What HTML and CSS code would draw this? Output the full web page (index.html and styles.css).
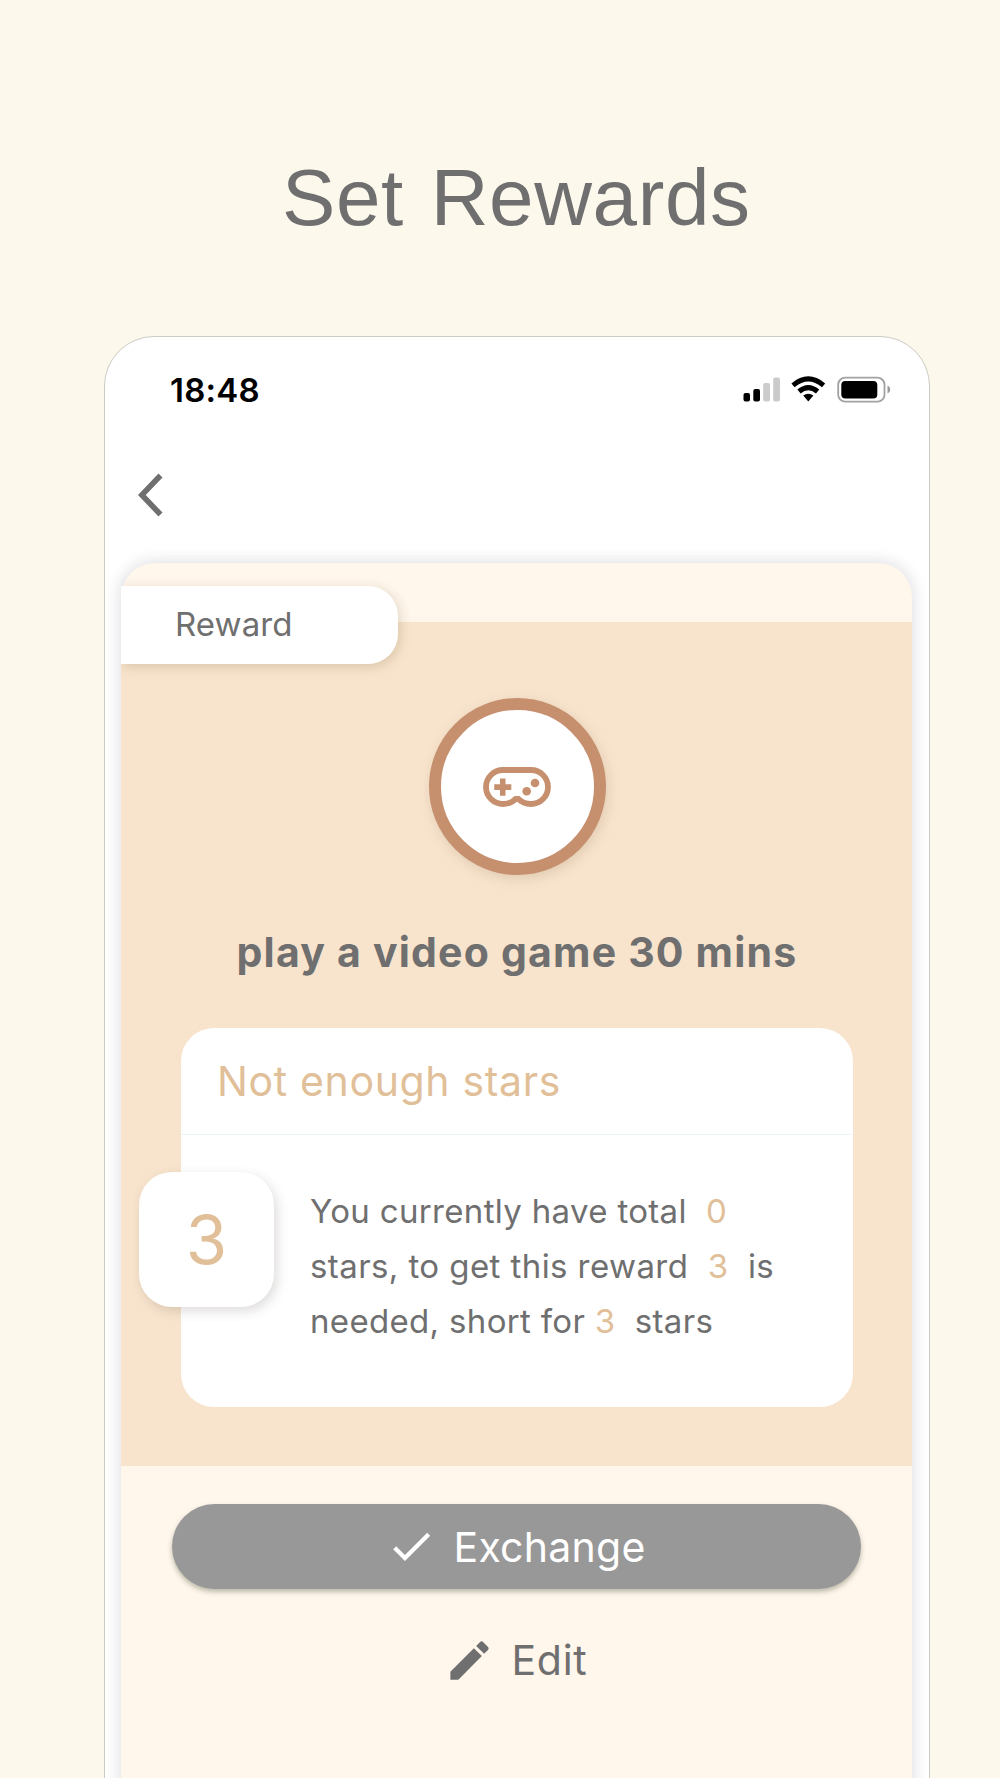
FILE: index.html
```html
<!DOCTYPE html>
<html lang="en">
<head>
<meta charset="utf-8">
<title>Set Rewards</title>
<link rel="stylesheet" href="styles.css">
</head>
<body>
<h1 class="headline">Set Rewards</h1>
<main class="phone">
  <div class="status">
    <span class="time">18:48</span>
    <svg class="status-icons" width="148" height="28" viewBox="0 0 148 28">
      <rect x=".5" y="17" width="6.5" height="8.5" rx="2"/>
      <rect x="10.3" y="13" width="6.7" height="12.5" rx="2"/>
      <g fill="#cbcbcb"><rect x="20.2" y="7" width="6.8" height="18.5" rx="2"/><rect x="30.2" y="1.5" width="6.8" height="24" rx="2"/></g>
      <g fill="none" stroke="#000" stroke-width="5">
        <path d="M50 9.3Q65.3-3.4 80.6 9.3"/>
        <path d="M56 15.5Q65.3 7.6 74.6 15.5"/>
      </g>
      <path d="M60.2 19.5Q65.3 15.9 70.4 19.5L65.3 25.6Z"/>
      <rect x="95.2" y="1.7" width="46.3" height="24" rx="7" fill="none" stroke="#a2a2a2" stroke-width="1.8"/>
      <rect x="98.3" y="5" width="36" height="17.5" rx="4"/>
      <path d="M144.5 9.5Q147.2 10.5 147.2 13.5T144.5 17.5Z" fill="#999"/>
    </svg>
  </div>
  <nav class="nav">
    <svg width="26" height="44" viewBox="0 0 26 44"><path d="M22.5 2.5L3.8 22L22.5 41.5" fill="none" stroke="#6f6f70" stroke-width="5.6"/></svg>
  </nav>
  <section class="card">
    <div class="tab">Reward</div>
    <div class="panel">
      <div class="medal">
        <svg width="68" height="40" viewBox="0 0 68 40" fill="#c6906f">
          <path d="M20 3H48A17 17 0 0 1 48 37C42 37 38 34.8 35.2 31.8H32.8C30 34.8 26 37 20 37A17 17 0 0 1 20 3Z" fill="none" stroke="#c6906f" stroke-width="5.8"/>
          <path d="M17 11.6H22.5V17.3H28.3V23H22.5V28.8H17V23H11.2V17.3H17Z"/>
          <circle cx="43.7" cy="24.3" r="4.3"/><circle cx="52" cy="16" r="4.3"/>
        </svg>
      </div>
      <h2 class="title">play a video game 30 mins</h2>
      <div class="info">
        <div class="info-head">Not enough stars</div>
        <div class="info-body">
          <div class="count">3</div>
          <p class="message">You currently have total &nbsp;<b>0</b><br><span class="wide">stars, to get this reward &nbsp;<b>3</b>&nbsp; is</span><br>needed, short for <b>3</b>&nbsp; stars</p>
        </div>
      </div>
    </div>
    <div class="exchange">
      <svg width="50.5" height="50.5" viewBox="0 0 24 24" fill="#fff"><path d="M9 16.17L4.83 12l-1.42 1.41L9 19 21 7l-1.41-1.41z"/></svg>
      <span>Exchange</span>
    </div>
    <div class="edit">
      <svg width="51" height="51" viewBox="0 0 24 24" fill="#6f6f70"><path d="M3 17.25V21h3.75L17.81 9.94l-3.75-3.75L3 17.25zM20.71 7.04c.39-.39.39-1.02 0-1.41l-2.34-2.34c-.39-.39-1.02-.39-1.41 0l-1.83 1.83 3.75 3.75 1.83-1.83z"/></svg>
      <span>Edit</span>
    </div>
  </section>
</main>
</body>
</html>
```
FILE: styles.css
```css
* { box-sizing: border-box; }
body {
  margin: 0;
  height: 1778px;
  overflow: hidden;
  display: flex;
  flex-direction: column;
  background: #fdf8ec;
  color: #6f6f70;
  font-family: Inter, "Liberation Sans", sans-serif;
}
svg { display: block; flex: none; }
.headline {
  flex: none;
  margin: 0;
  height: 336px;
  padding: 153px 0 0 282px;
  font: 400 80px/90px "Liberation Sans", sans-serif;
  letter-spacing: .6px;
  word-spacing: 4px;
  white-space: nowrap;
}
.phone {
  width: 826px;
  height: 1500px;
  flex: none;
  margin-left: 104px;
  border: 1px solid #cbcbc3;
  border-radius: 50px;
  background: #fff;
}
.status {
  display: flex;
  justify-content: space-between;
  height: 103px;
  padding: 38.5px 38px 0 65px;
}
.time {
  color: #000;
  font-weight: 600;
  font-size: 33px;
  line-height: 28px;
  letter-spacing: .2px;
}
.nav { height: 123px; padding: 33px 0 0 33px; }
.card {
  width: 791px;
  height: 1300px;
  margin-left: 16px;
  border-radius: 34px;
  background: #fff6ec;
  box-shadow: 0 0 14px 3px rgba(50, 50, 80, .13);
  padding-top: 23px;
}
.tab {
  position: relative;
  width: 277px;
  height: 78px;
  padding-left: 54px;
  border-radius: 0 30px 30px 0;
  background: #fff;
  box-shadow: 2px 3px 12px rgba(110, 90, 40, .22);
  clip-path: inset(-20px -25px -25px 0);
  font-size: 33px;
  line-height: 77px;
  letter-spacing: .1px;
}
.panel {
  height: 844px;
  margin-top: -42px;
  padding: 76px 59px 0 60px;
  background: #f8e4cd;
}
.medal {
  width: 177px;
  height: 177px;
  margin: 0 auto;
  border: 12.5px solid #c6906f;
  border-radius: 50%;
  background: #fff;
  box-shadow: 2px 4px 13px rgba(110, 80, 50, .17);
  display: flex;
  align-items: center;
  justify-content: center;
}
.title {
  margin: 51px 0 0;
  height: 102px;
  text-align: center;
  font-weight: 700;
  font-size: 41px;
  line-height: 52px;
  letter-spacing: 1.2px;
  white-space: nowrap;
}
.info {
  height: 379px;
  border-radius: 33px;
  background: #fff;
}
.info-head {
  height: 107px;
  padding-left: 36px;
  border-bottom: 1px solid #edf5f6;
  color: #e1bf99;
  font-size: 41px;
  line-height: 106px;
  letter-spacing: .65px;
}
.info-body { display: flex; padding-top: 37px; margin-left: -42px; }
.count {
  width: 135px;
  height: 135px;
  flex: none;
  border-radius: 33px;
  background: #fff;
  box-shadow: 3px 4px 12px rgba(60, 50, 40, .17);
  color: #e1bf99;
  font-size: 67px;
  line-height: 135px;
  text-align: center;
}
.message {
  margin: 12px 0 0 36px;
  font-size: 33px;
  line-height: 55px;
  letter-spacing: .33px;
  white-space: nowrap;
}
.message .wide { letter-spacing: .42px; }
.message b { color: #e1bf99; font-weight: 400; }
.exchange {
  height: 85px;
  margin: 38px 51px 0 51px;
  padding-left: 214px;
  border-radius: 43px;
  background: #989898;
  box-shadow: 0 3px 5px rgba(80, 90, 60, .38);
  color: #fff;
  display: flex;
  align-items: center;
  gap: 17px;
  font-size: 41px;
  letter-spacing: .25px;
}
.edit {
  display: flex;
  align-items: center;
  gap: 17px;
  margin-top: 46px;
  padding-left: 322.5px;
  font-size: 41px;
  line-height: 51px;
  letter-spacing: .7px;
}
```
